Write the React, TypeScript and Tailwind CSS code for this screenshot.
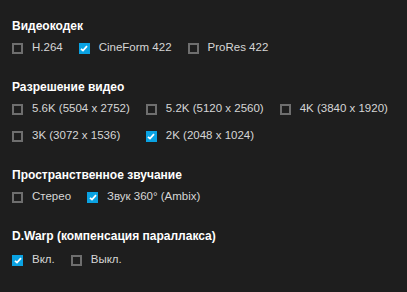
type Opt = { label: string; checked?: boolean };

const codecs: Opt[] = [
  { label: 'H.264' },
  { label: 'CineForm 422', checked: true },
  { label: 'ProRes 422' },
];

const resolutions: Opt[] = [
  { label: '5.6K (5504 x 2752)' },
  { label: '5.2K (5120 x 2560)' },
  { label: '4K (3840 x 1920)' },
  { label: '3K (3072 x 1536)' },
  { label: '2K (2048 x 1024)', checked: true },
];

const audio: Opt[] = [{ label: 'Стерео' }, { label: 'Звук 360° (Ambix)', checked: true }];

const dwarp: Opt[] = [{ label: 'Вкл.', checked: true }, { label: 'Выкл.' }];

function Checkbox({ label, checked }: Opt) {
  return (
    <label className="flex items-center h-4 gap-[9px] text-[11.5px] text-[#d6d6d6] whitespace-nowrap">
      {checked ? (
        <span className="w-[11px] h-[11px] bg-[#0aa2e2] flex items-center justify-center">
          <svg width="8" height="7" viewBox="0 0 8 7">
            <path d="M1 3.8 L3 5.6 L7 1.2" stroke="#fff" strokeWidth="1.8" fill="none" />
          </svg>
        </span>
      ) : (
        <span className="w-[11px] h-[11px] border-2 border-[#6e6e6e]" />
      )}
      {label}
    </label>
  );
}

function Section({ title, children }: { title: string; children: React.ReactNode }) {
  return (
    <section className="flex flex-col gap-[6px]">
      <h3 className="h-4 leading-4 text-[12px] font-bold text-white">{title}</h3>
      {children}
    </section>
  );
}

export default function App() {
  return (
    <div
      className="w-[407px] h-[292px] bg-[#1e1e1e] pl-3 pt-[18px] flex flex-col gap-[23px]"
      style={{ fontFamily: '"Liberation Sans", Arial, sans-serif' }}
    >
      <Section title="Видеокодек">
        <div className="flex gap-4">
          {codecs.map((o) => (
            <Checkbox key={o.label} {...o} />
          ))}
        </div>
      </Section>

      <Section title="Разрешение видео">
        <div className="grid grid-cols-[auto_auto_auto] justify-start gap-x-4 gap-y-[11px]">
          {resolutions.map((o) => (
            <Checkbox key={o.label} {...o} />
          ))}
        </div>
      </Section>

      <Section title="Пространственное звучание">
        <div className="flex gap-4">
          {audio.map((o) => (
            <Checkbox key={o.label} {...o} />
          ))}
        </div>
      </Section>

      <Section title="D.Warp (компенсация параллакса)">
        <div className="flex gap-4 mt-[2px]">
          {dwarp.map((o) => (
            <Checkbox key={o.label} {...o} />
          ))}
        </div>
      </Section>
    </div>
  );
}
